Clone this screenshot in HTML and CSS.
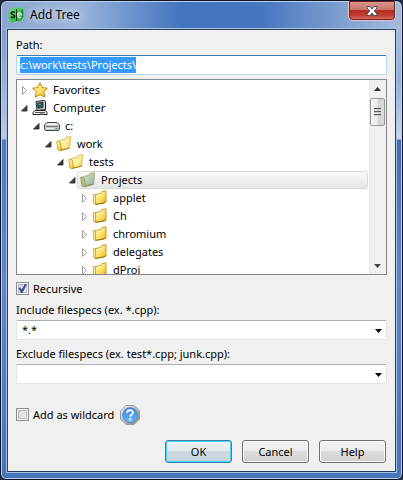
FILE: index.html
```html
<!DOCTYPE html>
<html lang="en">
<head>
<meta charset="utf-8">
<title>Add Tree</title>
<link rel="stylesheet" href="styles.css">
</head>
<body>
<svg class="defs" aria-hidden="true">
  <defs>
    <linearGradient id="gold" x1="0" y1="0" x2="1" y2="1"><stop offset="0" stop-color="#fff6b0"/><stop offset=".55" stop-color="#fde067"/><stop offset="1" stop-color="#e8b01c"/></linearGradient>
    <linearGradient id="pale" x1="0" y1="0" x2="1" y2="1"><stop offset="0" stop-color="#fffbd6"/><stop offset="1" stop-color="#f9dc62"/></linearGradient>
    <linearGradient id="sage" x1="0" y1="0" x2="1" y2="1"><stop offset="0" stop-color="#dbe6c4"/><stop offset="1" stop-color="#8fb0a0"/></linearGradient>
    <linearGradient id="blue" x1="0" y1="0" x2="0" y2="1"><stop offset="0" stop-color="#3584dc"/><stop offset="1" stop-color="#67b5fa"/></linearGradient>
    <linearGradient id="steel" x1="0" y1="0" x2="1" y2="1"><stop offset="0" stop-color="#ffffff"/><stop offset="1" stop-color="#777"/></linearGradient>
    <linearGradient id="green" x1="0" y1="0" x2="1" y2="1"><stop offset="0" stop-color="#6be07a"/><stop offset="1" stop-color="#1fa038"/></linearGradient>
    <symbol id="closed" viewBox="0 0 9 11"><path d="M2.500 1.500v8L6.500 5.500z" fill="#fff" stroke="#a0a0a0"/></symbol>
    <symbol id="open" viewBox="0 0 9 11"><path d="M7 2.500V8H1.500z" fill="#404040" stroke="#222" stroke-width=".8"/></symbol>
    <symbol id="folder" viewBox="0 0 16 16">
      <path d="M3.500 4.500L9 3.500l1-2 4-.7v11l-2 1-8.500 1.400z" fill="url(#gold)" stroke="#d09a18"/>
      <path d="M1.500 4.300l2 .2v9.700l-2-1z" fill="#fff0a0" stroke="#cf9f25" stroke-width=".8"/>
      <path d="M3.500 14.500l8.500-1.500 2-1.500" fill="none" stroke="#9c6f08"/>
      <path d="M4.800 5.500l5-.9 1-2" fill="none" stroke="#fffbd8"/>
    </symbol>
    <symbol id="folder-open" viewBox="0 0 16 16">
      <path d="M3.500 4.500L9 3.300l1-2 4.500-.6-.8 11L4.500 14z" fill="url(#pale)" stroke="#d4ab38" stroke-width=".8"/>
      <path d="M.7 5.500L3 5l1.300 1.500L5.500 14l-1.500.8-2-.8z" fill="url(#gold)" stroke="#cb961d" stroke-width=".8"/>
      <path d="M4.500 14.400l9-2.200" stroke="#a87a10"/>
    </symbol>
    <symbol id="folder-selected" viewBox="0 0 16 16">
      <path d="M3.500 4.500L9 3.300l1-2 4.500-.6-.8 11L4.500 14z" fill="url(#sage)" stroke="#95a566" stroke-width=".8"/>
      <path d="M.7 5.500L3 5l1.300 1.500L5.500 14l-1.500.8-2-.8z" fill="#b9c47c" stroke="#8a9050" stroke-width=".8"/>
      <path d="M4.500 14.400l9-2.200" stroke="#6f7c4a"/>
    </symbol>
  </defs>
</svg>
<main class="window">
  <header class="titlebar">
    <svg class="logo" viewBox="0 0 16 16" aria-hidden="true">
      <path d="M4 1.500L14.500.5l1 9-2.500 4.500-10 1.500L.5 11l1-7z" fill="url(#green)" stroke="#5ccf68" stroke-width=".7"/>
      <path d="M13 4l2-2 .3 7.500L13 13z" fill="#17812f"/>
      <path d="M6.800 5.300c-2.600-1-4 .2-3.600 1.300.5 1.300 3.500.8 3.500 2.500 0 1.600-2.300 1.700-4 .9" fill="none" stroke="#10200f" stroke-width="1.500"/>
      <path d="M8.500 2v12" stroke="#163b1a"/>
      <path d="M10 8h3.500c-.2-3-3.800-2.800-3.800.2 0 2.500 2 2.800 3.700 1.800" fill="none" stroke="#d6ffd7" stroke-width="1.200"/>
    </svg>
    <h1>Add Tree</h1>
    <button class="close" type="button" aria-label="Close">
      <svg viewBox="0 0 12 10" aria-hidden="true"><path d="M1 .5h3L6 3 8 .5h3v1.500L8.200 5 11 8v1.500H8L6 7 4 9.500H1V8l2.800-3L1 2z" fill="#fff" stroke="#4b4d5c"/></svg>
    </button>
  </header>
  <form class="client">
    <label class="caption" for="path">Path:</label>
    <div class="pathbox"><input class="path" id="path" type="text" value="c:\work\tests\Projects\" spellcheck="false" autocomplete="off"></div>
    <div class="treebox">
      <ul class="tree" role="tree">
        <li class="d0"><svg class="exp"><use href="#closed"/></svg><svg class="ico" viewBox="0 0 16 16"><path d="M8 .7l2.300 4.800 5.200.8-3.700 3.600 1 5.300L8 12.700l-4.700 2.500 1-5.300L.5 6.300l5.200-.8z" fill="url(#gold)" stroke="#c18b12"/></svg><span>Favorites</span></li>
        <li class="d0"><svg class="exp"><use href="#open"/></svg><svg class="ico" viewBox="0 0 16 16"><path d="M4 1.500l8-1 1.500 1v8L5 10.500z" fill="#d5d5cf" stroke="#222"/><path d="M5.500 3l5.500-.7v5.200L6 8.300z" fill="#285e60" stroke="#111" stroke-width=".7"/><path d="M6.500 4l2-.3v2z" fill="#6fb4ae"/><path d="M3 10.500h10.500l1.500 2v2H1v-2z" fill="#eee" stroke="#222"/><path d="M3 12.500h10M8 14h4" stroke="#555"/></svg><span>Computer</span></li>
        <li class="d1"><svg class="exp"><use href="#open"/></svg><svg class="ico" viewBox="0 0 16 16"><path d="M.5 7L3 4.500h10L15.500 7v4l-1 1.500H1.500L.5 11z" fill="#c6c6c6" stroke="#444"/><path d="M1.500 7L3.500 5.300h9L14.500 7z" fill="#f4f4f4"/><path d="M2 8.500h12" stroke="#777"/><path d="M2 10.500h8" stroke="#eee"/><path d="M11.500 10.500h2" stroke="#2da138"/></svg><span>c:</span></li>
        <li class="d2"><svg class="exp"><use href="#open"/></svg><svg class="ico"><use href="#folder-open"/></svg><span>work</span></li>
        <li class="d3"><svg class="exp"><use href="#open"/></svg><svg class="ico"><use href="#folder-open"/></svg><span>tests</span></li>
        <li class="d4"><svg class="exp"><use href="#open"/></svg><div class="selected"><svg class="ico"><use href="#folder-selected"/></svg><span>Projects</span></div></li>
        <li class="d5"><svg class="exp"><use href="#closed"/></svg><svg class="ico"><use href="#folder"/></svg><span>applet</span></li>
        <li class="d5"><svg class="exp"><use href="#closed"/></svg><svg class="ico"><use href="#folder"/></svg><span>Ch</span></li>
        <li class="d5"><svg class="exp"><use href="#closed"/></svg><svg class="ico"><use href="#folder"/></svg><span>chromium</span></li>
        <li class="d5"><svg class="exp"><use href="#closed"/></svg><svg class="ico"><use href="#folder"/></svg><span>delegates</span></li>
        <li class="d5"><svg class="exp"><use href="#closed"/></svg><svg class="ico"><use href="#folder"/></svg><span>dProj</span></li>
      </ul>
      <div class="scrollbar" aria-hidden="true">
        <svg class="arrow" viewBox="0 0 7 4"><path d="M0 4L3.500 0 7 4z" fill="#333"/></svg>
        <div class="thumb"><i></i><i></i><i></i></div>
        <svg class="arrow down" viewBox="0 0 7 4"><path d="M0 0h7L3.500 4z" fill="#444"/></svg>
      </div>
    </div>
    <label class="check"><input type="checkbox" checked><span>Recursive</span></label>
    <label class="caption" for="include">Include filespecs (ex. *.cpp):</label>
    <div class="combo"><select id="include"><option>*.*</option></select><svg viewBox="0 0 7 4" aria-hidden="true"><path d="M0 0h7L3.500 4z"/></svg></div>
    <label class="caption" for="exclude">Exclude filespecs (ex. test*.cpp; junk.cpp):</label>
    <div class="combo"><select id="exclude"><option></option></select><svg viewBox="0 0 7 4" aria-hidden="true"><path d="M0 0h7L3.500 4z"/></svg></div>
    <div class="wildcard">
      <label class="check"><input type="checkbox"><span>Add as wildcard</span></label>
      <button class="info" type="button" aria-label="About wildcards">
        <svg viewBox="0 0 20 20" aria-hidden="true"><path d="M6 .5h8L19.500 6v8L14 19.500H6L.5 14V6z" fill="url(#steel)" stroke="#999"/><circle cx="10" cy="10" r="7.500" fill="url(#blue)" stroke="#4a86c8" stroke-width=".7"/><path d="M7 7.800c0-3.500 6-3.500 6-.3 0 2-2.800 2-2.800 4.200" fill="none" stroke="#fff" stroke-width="2"/><path d="M9.100 13.300h2.200v2.200H9.100z" fill="#fff"/></svg>
      </button>
    </div>
    <footer class="actions">
      <button class="btn default" type="submit">OK</button>
      <button class="btn" type="button">Cancel</button>
      <button class="btn" type="button">Help</button>
    </footer>
  </form>
</main>
<script src="main.js"></script>
</body>
</html>
```
FILE: styles.css
```css
* { box-sizing: border-box; }
body {
  margin: 0;
  background: #273043;
  color: #000;
  font: 11px/16px "Noto Sans", "Open Sans", sans-serif;
}
button, input, select { font: inherit; color: inherit; margin: 0; }
svg { display: block; flex: none; }
.defs { position: absolute; width: 0; height: 0; }

.window {
  display: flex;
  flex-direction: column;
  height: 100vh;
  min-height: 440px;
  padding: 0 6px 7px;
  border: 1px solid #101526;
  border-radius: 7px 7px 6px 6px;
  box-shadow: inset 0 0 0 1px #b9d3ee;
  background:
    linear-gradient(#a5bbdd 0, #8eb0df 50px, #c7d8ef 108px, #3e6db4 109px, #5c88cb 250px, #426fb7 100%) right 30px / 8px 100% no-repeat,
    linear-gradient(#7e9dcd 0, #95b0da 50px, #b7cbe8 108px, #4c79bf 109px, #6088ca 250px, #426fb7 100%) left 30px / 8px 100% no-repeat,
    linear-gradient(90deg, #8ba6d0 0, #9ab4da 20%, #6e94ce 32%, #4374be 45%, #4776bf 65%, #7fa0d0 85%, #a5bbdd 100%) top / 100% 30px no-repeat,
    #4876be;
}
.titlebar {
  display: flex;
  flex: none;
  align-items: center;
  height: 28px;
  padding-left: 1px;
}
.titlebar h1 {
  flex: 1;
  margin: 0 0 0 6px;
  font-size: 12px;
  font-weight: 400;
  text-shadow: 0 0 7px #dfe9f6, 0 0 10px #dfe9f6;
}
.close {
  display: grid;
  place-items: center;
  align-self: flex-start;
  width: 48px;
  height: 20px;
  padding: 0;
  border: 1px solid #e7c4c8;
  border-top: 0;
  border-radius: 0 0 5px 5px;
  box-shadow: inset 0 0 0 1px #6f2528;
  background: linear-gradient(#d99a90 0, #cc7468 45%, #b02d20 46%, #c03c30 75%, #d77a6a 100%);
}
.close svg { width: 12px; height: 10px; }
.logo { width: 16px; height: 16px; }

.client {
  display: flex;
  flex: 1;
  flex-direction: column;
  min-height: 0;
  padding: 7px 8px 8px;
  border: 1px solid #2b3c59;
  outline: 1px solid #a9c4e4;
  background: #f0f0f0;
}
.caption { flex: none; height: 18px; }
.pathbox { display: flex; flex: none; height: 20px; margin-bottom: 4px; }
.path {
  flex: 1;
  min-width: 0;
  padding: 0 3px;
  border: 1px solid #b5d5ec;
  border-top-color: #3d7bad;
  border-radius: 2px;
  outline: 0;
  background: #fff;
}
.path::selection { background: #3399ff; color: #fff; }

.treebox {
  display: flex;
  flex: 1;
  min-height: 0;
  border: 1px solid #828790;
  background: #fff;
}
.tree {
  flex: 1;
  min-width: 0;
  margin: 0;
  padding: 1px 1px 0 3px;
  overflow: hidden;
  list-style: none;
}
.tree li { display: flex; align-items: center; height: 18px; }
.tree span { margin-left: 5px; }
.d1 { padding-left: 12px; }
.d2 { padding-left: 24px; }
.d3 { padding-left: 36px; }
.d4 { padding-left: 48px; }
.d5 { padding-left: 60px; }
.exp { width: 9px; height: 11px; margin-right: 3px; }
.ico { width: 16px; height: 16px; }
.selected {
  display: flex;
  flex: 1;
  align-items: center;
  height: 18px;
  margin-left: -3px;
  padding-left: 2px;
  border: 1px solid #d9d9d9;
  border-radius: 3px;
  background: linear-gradient(#fafafa, #e5e5e5);
}
.scrollbar {
  display: flex;
  flex: none;
  flex-direction: column;
  align-items: center;
  width: 17px;
  padding: 7px 1px 6px 0;
  border-left: 1px solid #e8e8e8;
  background: #f0f0f0;
}
.arrow { width: 7px; height: 4px; }
.arrow.down { margin-top: auto; }
.thumb {
  display: flex;
  flex-direction: column;
  align-items: center;
  justify-content: center;
  gap: 1px;
  width: 15px;
  height: 28px;
  margin-top: 7px;
  border: 1px solid #979797;
  border-radius: 2px;
  background: linear-gradient(90deg, #f6f6f6, #e9e9e9 50%, #d1d1d1 51%, #dcdcdc);
}
.thumb i { width: 7px; height: 2px; border-top: 1px solid #555; background: #ccc; }

.check { display: flex; flex: none; align-items: center; gap: 4px; height: 27px; }
.check input {
  display: grid;
  place-items: center;
  width: 13px;
  height: 13px;
  appearance: none;
  border: 1px solid #8e8f8f;
  box-shadow: inset 0 0 0 1px #f4f4f4, inset 0 0 0 2px #b9bec4;
  background: linear-gradient(135deg, #cbcfd5, #f6f6f6);
}
.check input:checked::before {
  content: "";
  width: 9px;
  height: 9px;
  background: #3c4f9b;
  clip-path: polygon(5% 45%, 25% 38%, 42% 62%, 75% 0, 100% 0, 50% 100%, 35% 100%);
}
.combo { position: relative; display: flex; flex: none; height: 20px; margin-bottom: 6px; }
.combo select {
  flex: 1;
  min-width: 0;
  padding: 0 20px 0 5px;
  appearance: none;
  border: 1px solid #e2e3ea;
  border-top-color: #abadb3;
  border-radius: 2px;
  outline: 0;
  background: #fff;
}
.combo svg { position: absolute; top: 9px; right: 5px; width: 7px; height: 4px; pointer-events: none; }

.wildcard { display: flex; flex: none; align-items: center; gap: 6px; margin-top: 11px; }
.info { padding: 0; border: 0; background: none; }
.info svg { width: 20px; height: 20px; }
.actions { display: flex; flex: none; justify-content: flex-end; gap: 10px; margin-top: 12px; padding-right: 1px; }
.btn {
  width: 67px;
  height: 23px;
  padding: 0;
  border: 1px solid #707070;
  border-radius: 3px;
  box-shadow: inset 0 0 0 1px #fbfbfb;
  background: linear-gradient(#f2f2f2 0, #ebebeb 49%, #dddddd 50%, #cfcfcf 100%);
}
.btn.default {
  border-color: #3c7fb1;
  box-shadow: inset 0 0 0 1px #48d0f5;
  background: linear-gradient(#edf3f5 0, #e0e9ed 49%, #ccd9df 50%, #c5d5dc 100%);
}
```
FILE: main.js
```js
const path = document.getElementById("path");
path.focus();
path.select();
```
